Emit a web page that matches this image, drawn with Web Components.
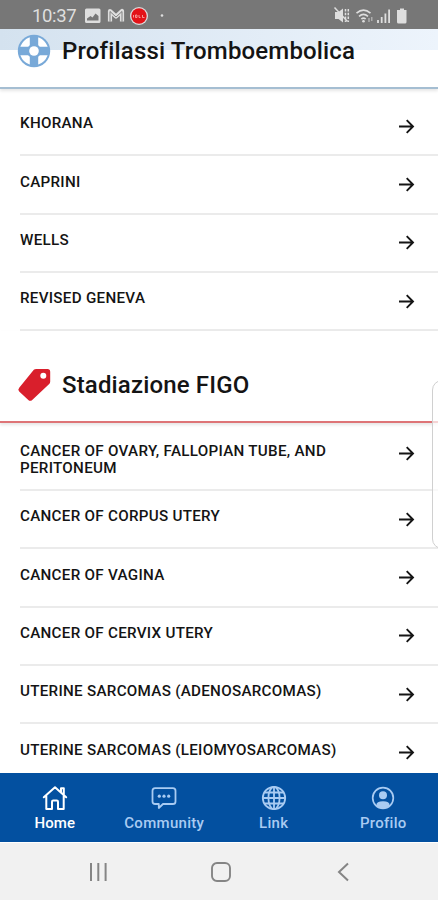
<!DOCTYPE html>
<html lang="it">
<head>
<meta charset="utf-8">
<title>Home</title>
<style>
html, body { margin: 0; height: 100%; overflow: hidden; background: #fff; }
body { font-family: Roboto, "Noto Sans", sans-serif; color: #141414; }
</style>
</head>
<body>
<app-screen></app-screen>
<script>
function define(name, html, setup) {
  const t = document.createElement('template');
  t.innerHTML = html;
  customElements.define(name, class extends HTMLElement {
    connectedCallback() {
      if (this.shadowRoot) return;
      this.attachShadow({ mode: 'open' }).append(t.content.cloneNode(true));
      if (setup) setup(this, this.shadowRoot);
    }
  });
}

const ICONS = {
  ring: `<svg viewBox="0 0 34 34" width="34" height="34"><circle cx="17" cy="17" r="16.2" fill="#78a9d8"/><circle cx="17" cy="17" r="14.2" fill="#fff"/><path d="M12.8 2h8.4v30h-8.4zM2 12.8h30v8.4H2z" fill="#78a9d8"/><circle cx="17" cy="17" r="7.2" fill="#78a9d8"/><circle cx="17" cy="17" r="4.8" fill="#fff"/></svg>`,
  tag: `<svg viewBox="0 0 34 34" width="34" height="34"><path d="M16.8 1.8Q17.8 1 19.2 1H30.5Q33.2 1 33.2 3.7V13.5Q33.2 15 32.2 16.1L15.2 32Q13.2 33.7 11.3 32L2.2 23.6Q.4 21.7 2.2 19.7Z" fill="#d91f2c"/><circle cx="26.3" cy="7.7" r="3" fill="#fff"/></svg>`,
  home: `<svg viewBox="0 0 26 26" width="26" height="26" fill="none" stroke="currentColor" stroke-width="2" stroke-linejoin="round" stroke-linecap="round"><path d="M1.8 12.3 13 2.2 24.2 12.3M19 7V3.2h2.8v6.4M4.3 10.8V24H10v-7.2q0-1.2 1.2-1.2h3.6q1.2 0 1.2 1.2V24h5.7V10.8"/></svg>`,
  chat: `<svg viewBox="0 0 26 26" width="26" height="26" fill="none" stroke="currentColor" stroke-width="1.8" stroke-linejoin="round"><path d="M4.1 3.2h17.8q2.6 0 2.6 2.6v10.6q0 2.6-2.6 2.6H12l-4.2 4V19H4.1q-2.6 0-2.6-2.6V5.8q0-2.6 2.6-2.6z"/><g fill="currentColor" stroke="none"><circle cx="8.3" cy="11.2" r="1.6"/><circle cx="13" cy="11.2" r="1.6"/><circle cx="17.7" cy="11.2" r="1.6"/></g></svg>`,
  globe: `<svg viewBox="0 0 26 26" width="26" height="26" fill="none" stroke="currentColor" stroke-width="1.8"><circle cx="13" cy="13" r="11.2"/><ellipse cx="13" cy="13" rx="5.6" ry="11.2"/><path d="M13 1.8v22.4M1.8 13h22.4M3.5 7.5h19M3.5 18.500h19"/></svg>`,
  user: `<svg viewBox="0 0 26 26" width="26" height="26"><circle cx="13" cy="13" r="10.3" fill="none" stroke="currentColor" stroke-width="1.7"/><circle cx="13" cy="10.2" r="4" fill="currentColor"/><path d="M6.3 20.4q0-4.2 6.7-4.2t6.7 4.2Q17 23.3 13 23.3T6.3 20.4z" fill="currentColor"/></svg>`
};

define('status-bar', `<style>
:host { display: flex; align-items: center; height: 29px; box-sizing: border-box; background: #777; color: #dedede; padding: 2px 29px 0 32px; }
span { font-size: 18.5px; line-height: 28px; letter-spacing: -.35px; width: 53px; }
svg { display: block; flex: none; }
.gap { flex: 1; }
</style>
<span>10:37</span>
<svg width="82" height="20" viewBox="0 0 82 20">
<path fill="#dedede" fill-rule="evenodd" d="M1.5 2.5H14q1.5 0 1.500 1.500v11.500q0 1.500-1.500 1.500H1.500Q0 17 0 15.500V4Q0 2.500 1.500 2.500zM2 14.500h11.500V10l-3-2.500-3 4-2-1.500L2 12.500z"/>
<path fill="none" stroke="#dedede" stroke-width="4.200" stroke-linejoin="round" d="M25 15.500V5l6 5.500L37 5v10.500"/><path fill="none" stroke="#777" stroke-width=".9" d="M25 15.500V5.500l6 5.500 6-5.500v10"/>
<circle cx="54" cy="10" r="9" fill="#dedede"/><circle cx="54" cy="10" r="7.700" fill="#e31318"/><path d="M48.500 9v2.500M50.500 9h1.500v2.500h-1.500zM54 9v2.500h1.500M57.500 9v2.500h2" stroke="#f7a5a2" fill="none" stroke-width=".9"/>
<circle cx="77" cy="9.500" r="1.300" fill="#dedede"/></svg>
<i class="gap"></i>
<svg width="76" height="20" viewBox="0 0 76 20" fill="none" stroke="#dedede">
<path fill="#dedede" stroke="none" d="M2 6h3.500L10 2.500v14L5.500 13H2z"/><path stroke-width="1.500" d="M1.500 1.500 14.500 15.500"/><path stroke-width="1.500" stroke-dasharray="2.500 1.300" d="M12.500 3v13M15.300 3v13"/>
<path stroke-width="1.600" d="M23.500 7.200q7-6 14 0M26 10.300q4.500-3.700 9 0M28.300 13q2.200-1.800 4.400 0"/><circle cx="30.500" cy="15.300" r="1.300" fill="#dedede" stroke="none"/><path stroke-width="1.200" stroke="#bbb" d="M36 12v4M38.800 11v4"/>
<path stroke-width="1.800" d="M45 14V17M48.700 11v6M52.400 7.500v9.500M56.100 3.500V17"/>
<path fill="#dedede" stroke="none" d="M67 2.500h4v1.500h2.500v12q0 1.500-1.500 1.500h-6.500q-1.500 0-1.500-1.500V4h3z"/></svg>`);

define('section-title', `<style>
:host { display: flex; align-items: center; gap: 11px; box-sizing: border-box; padding-left: 17px; border-bottom: 2px solid var(--line); box-shadow: 0 2px 3px #0000001a; }
h2 { margin: 0; font-size: 24px; line-height: 30px; font-weight: 500; letter-spacing: var(--track, .15px); white-space: nowrap; }
.icon, svg { display: block; }
</style><div class="icon"></div><h2><slot></slot></h2>`,
  (h, r) => { r.querySelector('.icon').innerHTML = ICONS[h.getAttribute('icon')]; });

define('score-row', `<style>
:host { display: flex; justify-content: space-between; align-items: flex-start; box-sizing: border-box; min-height: 58.35px; margin-left: 20px; padding: 17.3px 23px 11.7px 0; border-bottom: 2px solid #ebebeb; }
div { font-size: 15.2px; line-height: 17.3px; font-weight: 500; letter-spacing: .28px; width: 335px; }
svg { display: block; flex: none; margin-top: 2.4px; }
</style><div><slot></slot></div>
<svg width="17" height="17" viewBox="0 0 17 17" fill="none" stroke="#151515" stroke-width="1.9"><path d="M1 8.5h14M8.7 2.2 15 8.5l-6.300 6.300"/></svg>`);

define('nav-item', `<style>
:host { display: flex; flex: 1; flex-direction: column; align-items: center; padding-top: 12px; color: #a9cbf2; font-size: 15px; font-weight: 500; line-height: 20px; letter-spacing: .3px; }
:host([active]) { color: #fff; font-size: 15px; letter-spacing: .1px; }
.icon, svg { display: block; }
.icon { margin-bottom: 1.500px; }
</style><div class="icon"></div><span><slot></slot></span>`,
  (h, r) => { r.querySelector('.icon').innerHTML = ICONS[h.getAttribute('icon')]; });

define('tab-bar', `<style>
:host { display: flex; flex: none; height: 69px; background: #0350a0; }
</style><slot></slot>`);

define('system-bar', `<style>
:host { display: flex; flex: none; justify-content: space-between; align-items: center; box-sizing: border-box; height: 58px; background: #f1f1f1; padding: 0 87px 0 88px; border-top: 1px solid #fff; }
svg { display: block; }
.square { margin-right: 4px; }
</style>
<svg width="21" height="22" viewBox="0 0 21 22" stroke="#858585" stroke-width="2"><path d="M3 2v18M10.3 2v18M17.6 2v18"/></svg>
<svg class="square" width="22" height="22" viewBox="0 0 22 22" fill="none" stroke="#858585" stroke-width="1.9"><rect x="2" y="2" width="18" height="18" rx="5"/></svg>
<svg width="15" height="22" viewBox="0 0 15 22" fill="none" stroke="#858585" stroke-width="2"><path d="M12 2.500 3 11l9 8.500"/></svg>`);

define('app-screen', `<style>
:host { display: flex; flex-direction: column; width: 438px; height: 900px; position: relative; overflow: hidden; background: #fff; }
status-bar { flex: none; }
main { height: 744px; overflow: hidden; }
.first { height: 60px; padding-bottom: 15px; --line: #a5bed2; --track: .16px; background: linear-gradient(90deg, #d4e2ef, #edf4fc) 0 0 / 100% 21px no-repeat; }
.second { height: 91.5px; padding-top: 18px; --line: #de7477; }
.list { padding-top: 9px; }
.figo { padding-top: 2.5px; }
.handle { position: absolute; left: 432px; top: 380px; width: 20px; height: 169px; box-sizing: border-box; border: 1.5px solid #d0d0d0; border-radius: 10px; background: #ffffffb0; }
</style>
<status-bar></status-bar>
<main>
<section-title class="first" icon="ring">Profilassi Tromboembolica</section-title>
<div class="list">
<score-row>KHORANA</score-row><score-row>CAPRINI</score-row><score-row>WELLS</score-row><score-row>REVISED GENEVA</score-row>
</div>
<section-title class="second" icon="tag">Stadiazione FIGO</section-title>
<div class="figo">
<score-row>CANCER OF OVARY, FALLOPIAN TUBE, AND PERITONEUM</score-row><score-row>CANCER OF CORPUS UTERY</score-row><score-row>CANCER OF VAGINA</score-row><score-row>CANCER OF CERVIX UTERY</score-row><score-row>UTERINE SARCOMAS (ADENOSARCOMAS)</score-row><score-row>UTERINE SARCOMAS (LEIOMYOSARCOMAS)</score-row>
</div>
</main>
<tab-bar><nav-item icon="home" active>Home</nav-item><nav-item icon="chat">Community</nav-item><nav-item icon="globe">Link</nav-item><nav-item icon="user">Profilo</nav-item></tab-bar>
<system-bar></system-bar>
<div class="handle"></div>`);
</script>
</body>
</html>
